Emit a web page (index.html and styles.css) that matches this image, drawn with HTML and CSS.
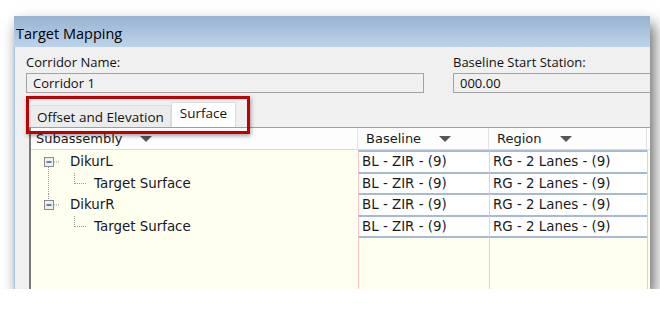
FILE: index.html
```html
<!DOCTYPE html>
<html lang="en">
<head>
    <meta charset="UTF-8">
    <title>Target Mapping</title>
    <link rel="stylesheet" href="styles.css">
</head>
<body>
    <div class="window">
        <div class="titlebar">Target Mapping</div>
        <div class="content">
            <div class="fields">
                <div class="field corridor">
                    <div class="label">Corridor Name:</div>
                    <div class="input">Corridor 1</div>
                </div>
                <div class="field station">
                    <div class="label">Baseline Start Station:</div>
                    <div class="input">000.00</div>
                </div>
            </div>

            <div class="tabs">
                <div class="tab">Offset and Elevation</div>
                <div class="tab active">Surface</div>
            </div>

            <div class="grid">
                <!-- header -->
                <div class="head first">Subassembly <span class="sort"></span></div>
                <div class="head">Baseline <span class="sort"></span></div>
                <div class="head">Region <span class="sort"></span></div>
                <div class="head rest"></div>

                <!-- rows -->
                <div class="tree">
                    <svg width="39" height="22"><rect x="13.5" y="6.5" width="9" height="9" class="box"/><line x1="15.5" y1="11" x2="20.5" y2="11" class="minus"/><line x1="23" y1="11" x2="28" y2="11" class="dots"/><line x1="17.5" y1="16" x2="17.5" y2="22" class="dots"/></svg>
                    <span>DikurL</span>
                </div>
                <div class="cell">BL - ZIR - (9)</div>
                <div class="cell">RG - 2 Lanes - (9)</div>
                <div class="fill"></div>

                <div class="tree">
                    <svg width="63" height="22"><line x1="17.5" y1="0" x2="17.5" y2="22" class="dots"/><line x1="43.5" y1="0" x2="43.5" y2="11" class="dots"/><line x1="44" y1="10.5" x2="55" y2="10.5" class="dots"/></svg>
                    <span>Target Surface</span>
                </div>
                <div class="cell">BL - ZIR - (9)</div>
                <div class="cell">RG - 2 Lanes - (9)</div>
                <div class="fill"></div>

                <div class="tree">
                    <svg width="39" height="22"><line x1="17.5" y1="0" x2="17.5" y2="6" class="dots"/><rect x="13.5" y="6.5" width="9" height="9" class="box"/><line x1="15.5" y1="11" x2="20.5" y2="11" class="minus"/><line x1="23" y1="11" x2="28" y2="11" class="dots"/></svg>
                    <span>DikurR</span>
                </div>
                <div class="cell">BL - ZIR - (9)</div>
                <div class="cell">RG - 2 Lanes - (9)</div>
                <div class="fill"></div>

                <div class="tree">
                    <svg width="63" height="22"><line x1="43.5" y1="0" x2="43.5" y2="11" class="dots"/><line x1="44" y1="10.5" x2="55" y2="10.5" class="dots"/></svg>
                    <span>Target Surface</span>
                </div>
                <div class="cell last">BL - ZIR - (9)</div>
                <div class="cell last">RG - 2 Lanes - (9)</div>
                <div class="fill"></div>

                <!-- empty space below -->
                <div class="tree"></div>
                <div class="fill"></div>
                <div class="fill"></div>
                <div class="fill"></div>
            </div>

            <div class="highlight"></div>
        </div>
    </div>
</body>
</html>
```

FILE: styles.css
```css
body {
    margin: 0;
    background-color: #ffffff;
    font-family: 'Open Sans', sans-serif;
    color: #111;
}
.window {
    margin: 16px 0 0 14px;
    width: 636px;
    height: 273px;
    display: flex;
    flex-direction: column;
    overflow: hidden;
    box-shadow: 4px 8px 14px rgba(0, 0, 0, 0.6);
}
.titlebar {
    height: 31px;
    line-height: 36px;
    padding-left: 2px;
    font-size: 14.5px;
    color: #000;
    background: linear-gradient(#98b3d0, #bcd3eb);
}
.content {
    position: relative;
    flex: 1;
    display: flex;
    flex-direction: column;
    background-color: #f0f0f0;
    border-left: 1px solid #a9c4e2;
}

/* fields */
.fields {
    display: flex;
    gap: 29px;
    padding: 6px 0 0 11px;
}
.field {
    flex-shrink: 0;
}
.label {
    font-size: 13px;
    line-height: 18px;
    margin-bottom: 2px;
}
.input {
    height: 18px;
    line-height: 18px;
    padding-left: 6px;
    font-size: 13px;
    border: 1px solid #a3a3a3;
    background-color: #f0f0f0;
}
.corridor {
    width: 398px;
}
.station {
    width: 230px;
}

/* tabs */
.tabs {
    display: flex;
    align-items: flex-end;
    height: 24px;
    margin: 10px 0 0 15px;
}
.tab {
    height: 21px;
    line-height: 22px;
    padding: 0 6px;
    font-size: 13.5px;
    border: 1px solid #dcdcdc;
    border-bottom: none;
    background-color: #ececec;
}
.tab.active {
    height: 24px;
    line-height: 21px;
    padding: 0 8px;
    background-color: #ffffff;
}

/* grid */
.grid {
    flex: 1;
    margin-left: 14px;
    display: grid;
    grid-template-columns: 327px 131px 158px 1fr;
    grid-template-rows: 22px repeat(3, 21.5px) 23.5px 1fr;
    border-top: 1px solid #a0a0a0;
    border-left: 2px solid #7a7a7a;
    font-family: 'DejaVu Sans', sans-serif;
    font-size: 13.4px;
    background-color: #fffff0;
}
.head {
    display: flex;
    align-items: center;
    padding-left: 8px;
    font-size: 13px;
    background-color: #fdfdfd;
    border-right: 1px solid #e2e2e2;
    border-bottom: 1px solid #d4dde8;
    color: #1a1a1a;
}
.head.first {
    padding-left: 5px;
}
.head.rest {
    padding: 0;
    border-right: none;
}
.sort {
    width: 0;
    height: 0;
    margin-left: 18px;
    border-left: 6px solid transparent;
    border-right: 6px solid transparent;
    border-top: 6px solid #555;
}
.tree {
    display: flex;
    align-items: flex-start;
    padding-top: 1px;
    line-height: 21px;
    color: #16162a;
}
.tree svg {
    flex-shrink: 0;
    overflow: visible;
}
.tree .box {
    fill: #f0f0f0;
    stroke: #8a8a8a;
}
.tree .minus {
    stroke: #3b5b8c;
    stroke-width: 1.5;
}
.tree .dots {
    stroke: #9a9a9a;
    stroke-dasharray: 1 1;
}
.cell {
    padding-left: 3px;
    line-height: 19px;
    background-color: #ffffff;
    border-left: 1px solid #ffc4c4;
    border-top: 2px solid #a6bbd2;
    white-space: nowrap;
    color: #1a1a1a;
}
.cell.last {
    border-bottom: 2px solid #a6bbd2;
}
.fill {
    border-left: 1px solid #ffc4c4;
}

/* red annotation around the tabs */
.highlight {
    position: absolute;
    left: 11px;
    top: 49px;
    width: 218px;
    height: 32px;
    border: 3px solid #c00000;
    box-shadow: 1px 2px 4px rgba(0, 0, 0, 0.35);
}
```
